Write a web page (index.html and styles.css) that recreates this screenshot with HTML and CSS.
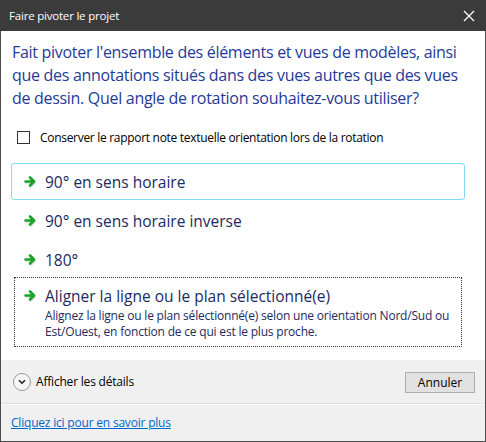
FILE: index.html
```html
<!DOCTYPE html>
<html lang="fr">
<head>
<meta charset="utf-8">
<link rel="stylesheet" href="styles.css">
</head>
<body>
<div class="window">
  <div class="titlebar">
    <span class="title">Faire pivoter le projet</span>
    <svg class="close" width="12" height="12" viewBox="0 0 12 12"><path d="M1 1 L11 11 M11 1 L1 11" stroke="#ffffff" stroke-width="1.3" fill="none"/></svg>
  </div>
  <div class="body">
    <div class="content">
      <p class="instruction">Fait pivoter l'ensemble des éléments et vues de modèles, ainsi que des annotations situés dans des vues autres que des vues de dessin. Quel angle de rotation souhaitez-vous utiliser?</p>
      <label class="check-row"><span class="checkbox"></span><span>Conserver le rapport note textuelle orientation lors de la rotation</span></label>
      <div class="links">
        <div class="cmd hover">
          <svg class="arrow" width="14" height="14" viewBox="0 0 14 14"><path d="M2.5 7.5 H10 M7 3.5 L11 7.5 L7 11.5" stroke="#c8c8c8" stroke-width="2.6" stroke-linecap="round" stroke-linejoin="round" fill="none" opacity="0.6"/><path d="M1.5 6.5 H9.5 M6 2.5 L10 6.5 L6 10.5" stroke="#1aa328" stroke-width="2.6" stroke-linecap="round" stroke-linejoin="round" fill="none"/></svg>
          <div class="cmd-text"><div class="cmd-title">90° en sens horaire</div></div>
        </div>
        <div class="cmd">
          <svg class="arrow" width="14" height="14" viewBox="0 0 14 14"><path d="M2.5 7.5 H10 M7 3.5 L11 7.5 L7 11.5" stroke="#c8c8c8" stroke-width="2.6" stroke-linecap="round" stroke-linejoin="round" fill="none" opacity="0.6"/><path d="M1.5 6.5 H9.5 M6 2.5 L10 6.5 L6 10.5" stroke="#1aa328" stroke-width="2.6" stroke-linecap="round" stroke-linejoin="round" fill="none"/></svg>
          <div class="cmd-text"><div class="cmd-title">90° en sens horaire inverse</div></div>
        </div>
        <div class="cmd">
          <svg class="arrow" width="14" height="14" viewBox="0 0 14 14"><path d="M2.5 7.5 H10 M7 3.5 L11 7.5 L7 11.5" stroke="#c8c8c8" stroke-width="2.6" stroke-linecap="round" stroke-linejoin="round" fill="none" opacity="0.6"/><path d="M1.5 6.5 H9.5 M6 2.5 L10 6.5 L6 10.5" stroke="#1aa328" stroke-width="2.6" stroke-linecap="round" stroke-linejoin="round" fill="none"/></svg>
          <div class="cmd-text"><div class="cmd-title">180°</div></div>
        </div>
        <div class="cmd focus">
          <svg class="arrow" width="14" height="14" viewBox="0 0 14 14"><path d="M2.5 7.5 H10 M7 3.5 L11 7.5 L7 11.5" stroke="#c8c8c8" stroke-width="2.6" stroke-linecap="round" stroke-linejoin="round" fill="none" opacity="0.6"/><path d="M1.5 6.5 H9.5 M6 2.5 L10 6.5 L6 10.5" stroke="#1aa328" stroke-width="2.6" stroke-linecap="round" stroke-linejoin="round" fill="none"/></svg>
          <div class="cmd-text">
            <div class="cmd-title">Aligner la ligne ou le plan sélectionné(e)</div>
            <div class="cmd-desc">Alignez la ligne ou le plan sélectionné(e) selon une orientation Nord/Sud ou Est/Ouest, en fonction de ce qui est le plus proche.</div>
          </div>
        </div>
      </div>
    </div>
    <div class="footer">
      <div class="footer-row">
        <div class="details">
          <span class="chev"><svg width="8" height="6" viewBox="0 0 8 6"><path d="M1 1.2 L4 4.2 L7 1.2" stroke="#222" stroke-width="1.6" fill="none"/></svg></span>
          <span>Afficher les détails</span>
        </div>
        <button class="btn">Annuler</button>
      </div>
      <div class="footer-link"><a href="#">Cliquez ici pour en savoir plus</a></div>
    </div>
  </div>
</div>
</body>
</html>
```
FILE: styles.css
```css
html, body { margin: 0; padding: 0; }
body {
  width: 486px; height: 442px; overflow: hidden;
  font-family: "Open Sans", "Noto Sans", sans-serif;
  background: #ffffff;
}
.window { width: 486px; height: 442px; display: flex; flex-direction: column; }
.titlebar {
  height: 31px; flex: none; background: #3b3b3b; color: #fff;
  display: flex; align-items: center; justify-content: space-between;
  padding: 0 11px 0 9px;
}
.title { font-size: 11.5px; letter-spacing: -0.2px; }
.close { display: block; }
.body {
  flex: 1; display: flex; flex-direction: column;
  border: 1px solid #4d4d4d; border-top: none;
}
.content { background: #fff; height: 329px; flex: none; padding: 0 0 0 10px; box-sizing: border-box; }
.instruction {
  margin: 0; padding: 10px 20px 0 1px; font-size: 16px; line-height: 23px;
  color: #1f3a99; letter-spacing: -0.3px;
}
.check-row {
  display: flex; align-items: center; gap: 10px; margin: 19px 0 0 6px;
  font-size: 12px; color: #000; height: 16px; letter-spacing: -0.3px;
}
.checkbox { width: 11px; height: 11px; border: 1px solid #333; background: #fff; flex: none; }
.links { margin-top: 18px; width: 454px; display: flex; flex-direction: column; }
.cmd {
  display: flex; align-items: flex-start; gap: 7px; box-sizing: border-box;
  min-height: 37px; padding: 9px 10px 0 12px; margin-bottom: 2px;
  border: 1px solid transparent; border-radius: 3px; position: relative;
}
.cmd.hover { border-color: #7fdcf7; }
.cmd.focus { padding-top: 12px; padding-bottom: 9px; margin-top: -6px; }
.cmd.focus::after {
  content: ""; position: absolute; left: 2px; right: 2px; top: 2px; bottom: 2px;
  border: 1px dotted #333;
}
.arrow { flex: none; margin-top: 2px; }
.cmd-title { font-size: 15.5px; line-height: 18px; color: #1c2a5e; letter-spacing: 0; }
.cmd-desc { font-size: 12px; line-height: 16px; color: #1c2a5e; margin-top: 3px; letter-spacing: -0.2px; }
.footer { flex: 1; background: #f0f0f0; display: flex; flex-direction: column; }
.footer-row {
  height: 44px; display: flex; align-items: center; justify-content: space-between;
  padding: 0 10px 0 12px; border-bottom: 1px solid #dfdfdf; box-sizing: border-box;
}
.details { display: flex; align-items: center; gap: 5px; font-size: 12px; color: #000; letter-spacing: -0.2px; }
.chev {
  width: 18px; height: 18px; border-radius: 50%; border: 1px solid #9a9a9a; box-sizing: border-box;
  display: flex; align-items: center; justify-content: center; background: #f6f6f6;
}
.chev svg { display: block; margin-top: 1px; }
.btn {
  width: 70px; height: 21px; background: #e1e1e1; border: 1px solid #adadad; padding: 0;
  font-family: inherit; font-size: 12px; color: #000; margin-top: 1px;
}
.footer-link { border-top: 1px solid #fafafa; padding: 9px 0 0 10px; font-size: 12px; letter-spacing: -0.2px; }
.footer-link a { color: #0066cc; text-decoration: underline; }
```
